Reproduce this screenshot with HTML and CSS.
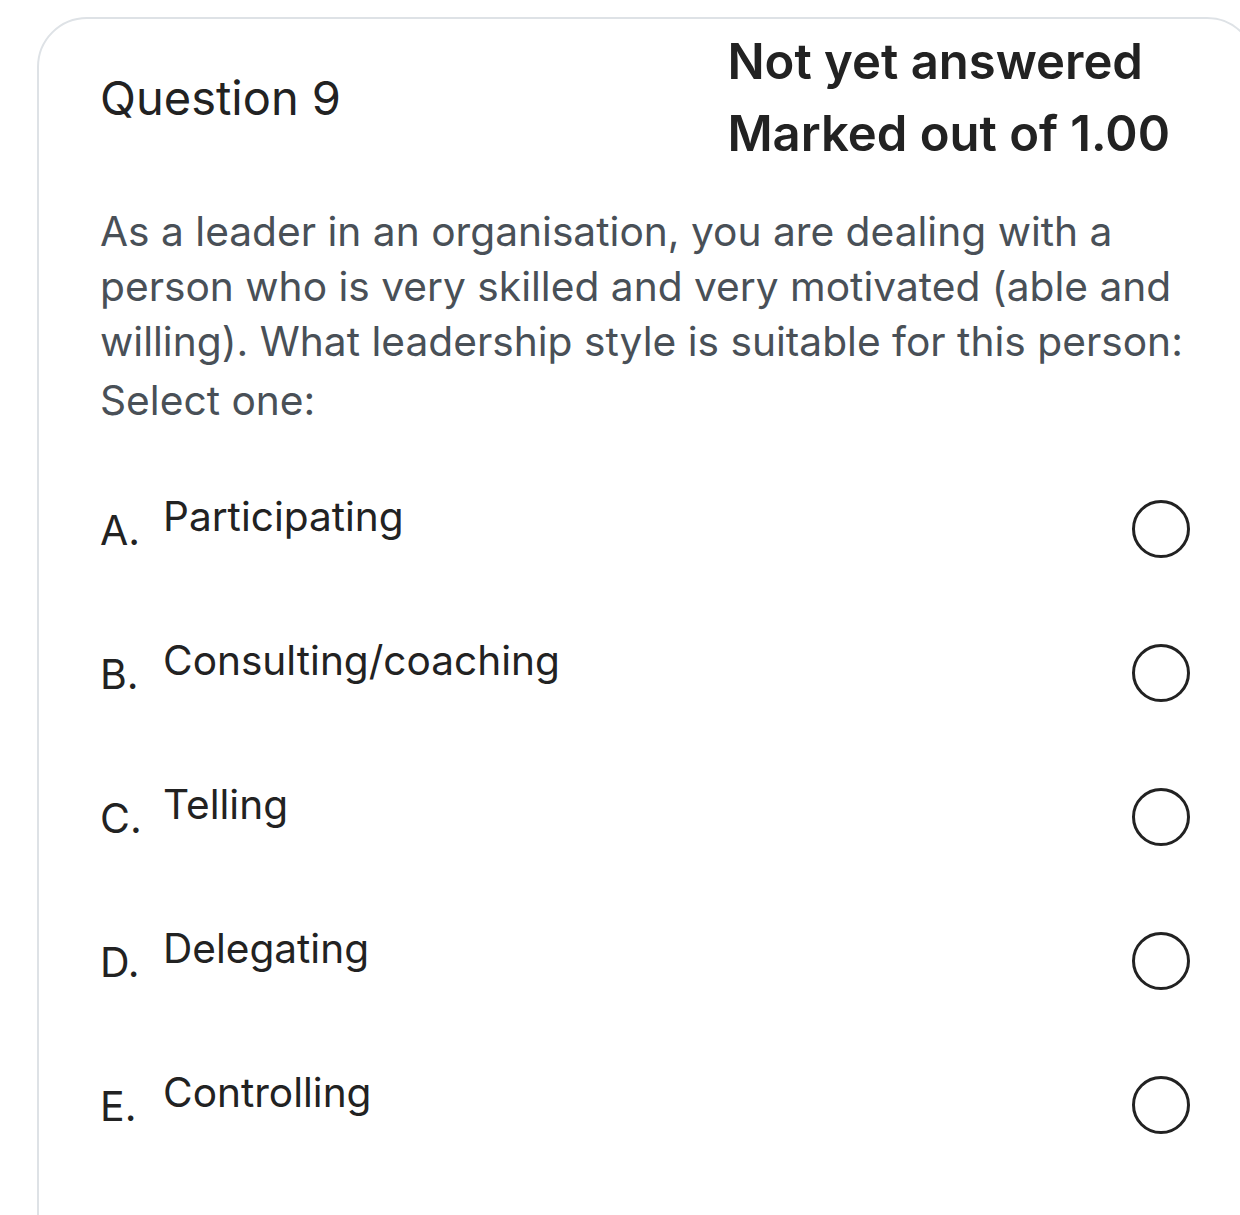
FILE: index.html
```html
<!DOCTYPE html>
<html lang="en">
<head>
<meta charset="utf-8">
<title>Question 9</title>
<link rel="stylesheet" href="styles.css">
</head>
<body>
<div class="card">
  <div class="head">
    <h2 class="qno">Question 9</h2>
    <div class="info">
      <div class="state">Not yet answered</div>
      <div class="grade">Marked out of 1.00</div>
    </div>
  </div>
  <div class="qtext">As a leader in an organisation, you are dealing with a person who is very skilled and very motivated (able and willing). What leadership style is suitable for this person:</div>
  <div class="prompt">Select one:</div>
  <div class="answers">
    <label class="opt"><span class="letter">A.</span><span class="text">Participating</span><span class="radio"></span></label>
    <label class="opt"><span class="letter">B.</span><span class="text">Consulting/coaching</span><span class="radio"></span></label>
    <label class="opt"><span class="letter">C.</span><span class="text">Telling</span><span class="radio"></span></label>
    <label class="opt"><span class="letter">D.</span><span class="text">Delegating</span><span class="radio"></span></label>
    <label class="opt"><span class="letter">E.</span><span class="text">Controlling</span><span class="radio"></span></label>
  </div>
</div>
</body>
</html>
```
FILE: styles.css
```css
html, body {
  margin: 0;
  padding: 0;
  background: #ffffff;
  overflow: hidden;
}
body {
  font-family: Inter, "Noto Sans", "Liberation Sans", sans-serif;
  color: #222222;
  height: 1215px;
}
.card {
  margin: 17px 0 0 37px;
  width: 1220px;
  box-sizing: border-box;
  min-height: 1400px;
  border: 2px solid #dee2e6;
  border-radius: 50px;
  padding: 7px 58px 0 61px;
}
.head {
  display: flex;
  justify-content: space-between;
  align-items: center;
  padding-right: 27px;
}
.qno {
  margin: 0;
  font-size: 47px;
  font-weight: 400;
  line-height: 72px;
  color: #222;
}
.info {
  font-size: 49px;
  font-weight: 600;
  line-height: 72px;
  color: #222;
}
.qtext, .prompt {
  font-size: 40.7px;
  line-height: 55px;
  color: #495057;
}
.qtext {
  margin-top: 34px;
}
.prompt {
  margin-top: 4px;
}
.answers {
  margin-top: 16px;
}
.opt {
  display: flex;
  align-items: center;
  height: 144px;
  padding-right: 7px;
}
.letter {
  width: 63px;
  font-size: 41px;
  padding-top: 28px;
  color: #222;
}
.text {
  flex: 1;
  font-size: 40.6px;
  color: #222;
}
.radio {
  width: 58px;
  height: 58px;
  margin-top: 26px;
  box-sizing: border-box;
  border: 3px solid #222;
  border-radius: 50%;
}
```
